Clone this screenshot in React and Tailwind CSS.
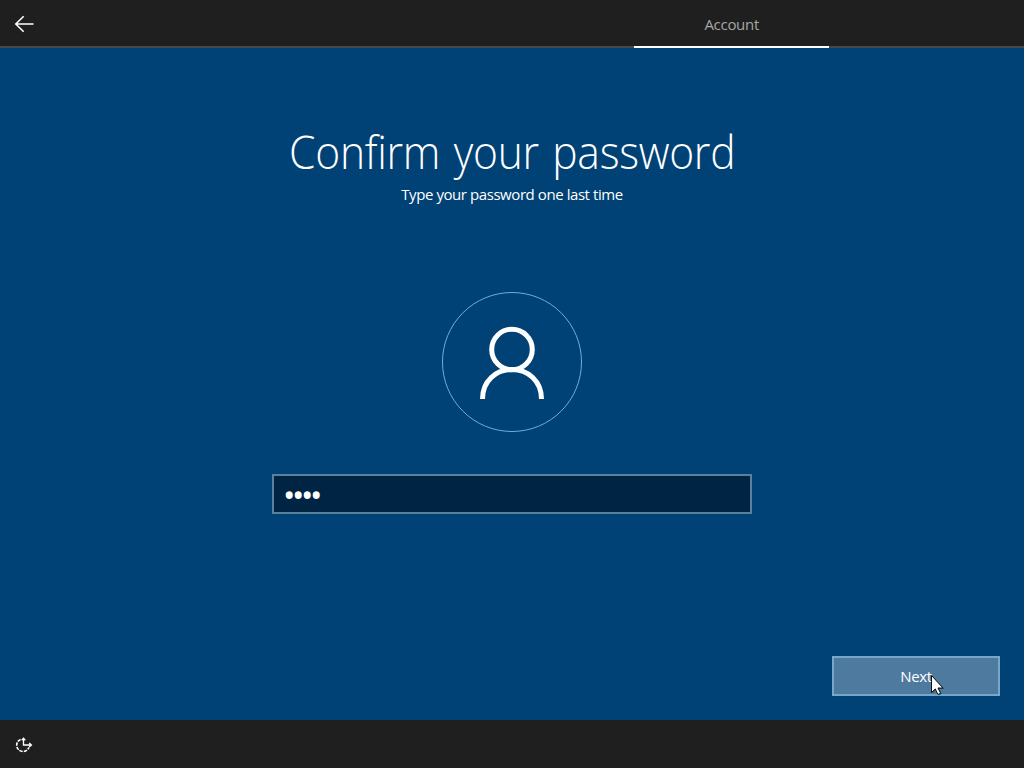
import React, { useState } from 'react';

const BackArrow = () => (
    <svg className="w-6 h-6" viewBox="0 0 24 24" fill="none" stroke="#fff" strokeWidth="1.6">
        <path d="M3.8 13H21.5M11.7 5.2L3.8 13l7.9 7.8" />
    </svg>
);

const EaseOfAccess = () => (
    <svg className="w-6 h-6" viewBox="0 0 24 24" fill="none" stroke="#fff" strokeWidth="1.6">
        <path d="M8.6 7.4A6.3 6.3 0 1 0 16.9 15.4" strokeDasharray="3.4 1.1" />
        <path d="M11.5 6v7h8M9.7 8.2l1.8-1.9 1.8 1.9M17.2 11l2.2 2-2.2 2" strokeWidth="1.3" />
    </svg>
);

const UserIcon = () => (
    <svg className="w-[140px] h-[140px]" viewBox="0 0 140 140" fill="none">
        <circle cx="70" cy="70" r="69.5" stroke="#72add9" />
        <circle cx="70" cy="57.5" r="20.3" stroke="#fff" strokeWidth="5" />
        <path d="M40.5 107C40.5 89 54 77.5 70 77.5S99.5 89 99.5 107" stroke="#fff" strokeWidth="5" />
    </svg>
);

const Cursor = () => (
    <svg className="absolute left-[98px] top-[18px] w-4 h-6" viewBox="0 0 16 24">
        <path d="M2.5 2.5v17l4-3.5 2.5 5.5 2.8-1.2L9.4 15h5z" fill="#00000055" />
        <path d="M1.5 1.5v17l3.8-3.6 2.6 5.6 2.7-1.2L8 14h5z" fill="#fff" stroke="#111" />
    </svg>
);

// Setup steps, only the active one shows its label
const steps = ['', '', '', 'Account', ''];

const App = () => {
    const [password, setPassword] = useState('pass');

    return (
        <div className="flex flex-col w-full h-screen overflow-hidden bg-[#004275] text-white font-['Open_Sans','Noto_Sans',sans-serif]">
            {/* Top bar */}
            <header className="flex h-12 shrink-0 bg-[#1f1f1f]">
                <button type="button" aria-label="Back" className="w-12 flex items-center justify-center border-b-2 border-[#484848]">
                    <BackArrow />
                </button>
                <nav className="flex-1 grid grid-cols-5">
                    {steps.map((step, idx) => (
                        <div
                            key={idx}
                            className={`flex items-center justify-center border-b-2 pt-0.5 pl-px text-[15px] tracking-[-0.3px] text-[#a6a6a6] ${step ? 'border-white' : 'border-[#484848]'}`}
                        >
                            {step}
                        </div>
                    ))}
                </nav>
            </header>

            {/* Password form */}
            <main className="flex-1 flex flex-col items-center pt-[73px]">
                <h1 className="h-[60px] text-[46px] leading-[60px] font-light tracking-[-0.3px] [word-spacing:3px] whitespace-nowrap scale-x-[0.925]">Confirm your password</h1>
                <p className="h-5 mt-[3px] text-[15px] leading-5 tracking-[-0.43px]">Type your password one last time</p>
                <div className="mt-[88px]">
                    <UserIcon />
                </div>
                <input
                    type="password"
                    value={password}
                    onChange={(e) => setPassword(e.target.value)}
                    className="mt-[42px] w-[480px] h-10 shrink-0 bg-[#002444] border-2 border-[#5c819d] pl-[9px] text-[33px] leading-9 tracking-[-3.4px] outline-none"
                />
                <div className="mt-auto mb-6 mr-6 self-end relative">
                    <button type="button" className="block w-[168px] h-10 bg-[#4f7a9f] border-2 border-[#75a7c8] text-[15px] tracking-[-0.3px]">
                        Next
                    </button>
                    <Cursor />
                </div>
            </main>

            {/* Bottom bar */}
            <footer className="h-12 shrink-0 flex items-center pl-3 bg-[#1f1f1f]">
                <EaseOfAccess />
            </footer>
        </div>
    );
};

export default App;
